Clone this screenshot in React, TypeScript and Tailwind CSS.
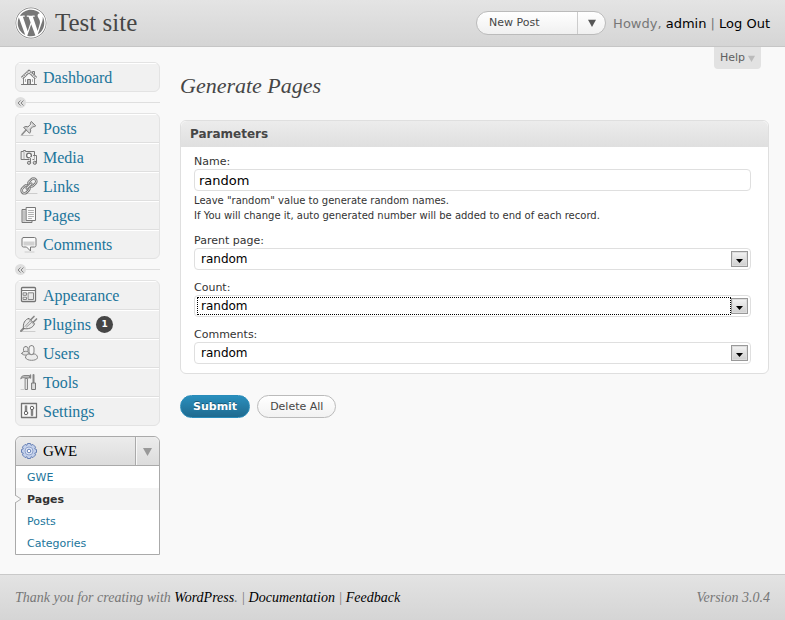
import type { ReactNode } from "react";
import { FaWordpress } from "react-icons/fa";

const sans = "font-['DejaVu_Sans','Liberation_Sans',sans-serif]";
const serif = "font-['Liberation_Serif',serif]";

function Icon({ children }: { children: ReactNode }) {
  return (
    <svg
      viewBox="0 0 18 18"
      className="h-[18px] w-[18px] shrink-0"
      fill="none"
      stroke="#858585"
      strokeWidth="1"
      strokeLinejoin="round"
      strokeLinecap="round"
      aria-hidden="true"
    >
      {children}
    </svg>
  );
}

const icons: Record<string, ReactNode> = {
  Dashboard: (
    <>
      <path d="M3.500 9v7.500h11V9L9 4z" fill="#f8f8f8" />
      <path d="M12.500 6V3.500h2V8" fill="#ddd" stroke="#777" />
      <path d="M2 10.200 9 3.300l7 6.900" strokeWidth="3.200" stroke="#7c7c7c" strokeLinecap="butt" />
      <path d="M2 10.200 9 3.300l7 6.900" strokeWidth="1.600" stroke="#ececec" strokeLinecap="butt" strokeDasharray="1.400 .6" />
      <path d="M5.500 11.500v2M12.500 11.500v2" stroke="#aaa" />
      <path d="M7.500 16.500v-5h3v5" fill="#bbb" stroke="#777" />
      <path d="M1.500 16.500h15" stroke="#777" />
    </>
  ),
  Posts: (
    <>
      <path d="M1 16.500h12" stroke="#c8c8c8" />
      <path d="M2 15.500 6.500 10.500" strokeWidth="1.600" stroke="#8c8c8c" />
      <path d="M4 8.200c1.300-.9 2.800-.8 3.900-.2l2.600-2.700c-.3-1 0-2 .8-2.800l4.400 4.300c-.8.9-1.900 1.100-2.800.8l-2.500 2.600c.5 1.300.4 2.600-.6 3.800z" fill="#d4d4d4" stroke="#747474" />
      <path d="m8.600 8.800 3-3" stroke="#fff" />
    </>
  ),
  Media: (
    <>
      <path d="M1.500 3.500h2v-1h2v1h9v8h-13z" fill="#eee" stroke="#777" />
      <path d="M4 4v7" stroke="#aaa" />
      <circle cx="9" cy="7.500" r="2.400" fill="#fff" stroke="#707070" strokeWidth="1.300" />
      <path d="M11 14.500V10.500M16 8v6.500" stroke="#f1f1f1" strokeWidth="3" />
      <path d="M10.500 14v-3.500M13.500 7.500h3V14" stroke="#777" />
      <circle cx="9" cy="14.800" r="1.600" fill="#ccc" stroke="#777" />
      <circle cx="14.800" cy="14.800" r="1.600" fill="#ccc" stroke="#777" />
    </>
  ),
  Links: (
    <>
      <path d="M5 16.500h12" stroke="#ccc" />
      <g transform="rotate(-45 9 9)">
        <rect x="-.3" y="6" width="9" height="5.800" rx="2.900" stroke="#777" strokeWidth="2.500" />
        <rect x="9.300" y="6" width="9" height="5.800" rx="2.900" stroke="#777" strokeWidth="2.500" />
        <rect x="-.3" y="6" width="9" height="5.800" rx="2.900" stroke="#ddd" strokeWidth=".9" />
        <rect x="9.300" y="6" width="9" height="5.800" rx="2.900" stroke="#ddd" strokeWidth=".9" />
        <path d="M6 9h6" stroke="#777" strokeWidth="3" />
        <path d="M6 9h6" stroke="#e8e8e8" />
      </g>
    </>
  ),
  Pages: (
    <>
      <path d="M5.500 3.500h-3.500v13h10v-2" fill="#ddd" stroke="#777" />
      <path d="M4 5v10" stroke="#aaa" />
      <path d="M6.500 1.500h9v13h-9z" fill="#fafafa" stroke="#777" />
      <path d="M8.500 4.500h5M8.500 6.500h5M8.500 8.500h5M8.500 10.500h5M8.500 12.500h3" stroke="#b0b0b0" />
    </>
  ),
  Comments: (
    <>
      <path d="M5 17h9" stroke="#ccc" />
      <path d="M3.500 2.500h11q1.500 0 1.500 1.500v6.500q0 1.500-1.500 1.500H10.500V16L6.500 12h-3q-1.500 0-1.500-1.500V4q0-1.500 1.500-1.500z" fill="#fafafa" stroke="#777" />
      <path d="M3.500 6.500h11v4h-11z" fill="#d0d0d0" stroke="none" />
    </>
  ),
  Appearance: (
    <>
      <rect x="1.500" y="1.500" width="14" height="14" rx="1" fill="#fafafa" stroke="#747474" strokeWidth="1.300" />
      <path d="M2 4.500h13" stroke="#777" />
      <path d="M3.500 6.800h3v2.500h-3zM3.500 11.200h3v2.300h-3zM8.500 6.800h5v6.700h-5z" fill="#e8e8e8" />
    </>
  ),
  Plugins: (
    <>
      <path d="M1 16.500h14" stroke="#ccc" />
      <path d="M1 16 4 13" strokeWidth="2" stroke="#888" />
      <path d="m10.500 5 3.500-3.500M13 7.500 16.500 4" strokeWidth="1.700" stroke="#888" />
      <path d="M3.500 13.500C2.500 8.500 5 4.500 9 3.300l5.500 5.500c-1.500 4-6 5.800-11 4.700z" fill="#e8e8e8" stroke="#747474" />
      <path d="m5 11.500 4.500-5M6.500 12l5-4.500M9 4.500l4.500 4.500" stroke="#999" />
    </>
  ),
  Users: (
    <>
      <rect x="3.500" y="2.500" width="4.500" height="6" rx="2.200" fill="#eee" />
      <path d="M1.800 9.500c0-3 7.200-3 7.200 0 0 2.200-7.200 2.200-7.200 0z" fill="#e4e4e4" />
      <rect x="9" y="1.500" width="5" height="9" rx="2.500" fill="#f4f4f4" />
      <path d="M5.500 13.500c0-2.300 1.800-3.600 3.500-3.600 1.500 1 3.500 1 5 0 1.700 0 3.500 1.500 3.500 3.600 0 3.800-12 3.800-12 0z" fill="#ececec" />
    </>
  ),
  Tools: (
    <>
      <path d="M1 5.500C1 3 3 2.500 5 2.500h4.500v2.500H5C3.500 4.500 2 4.500 1 5.500z" fill="#bbb" />
      <path d="M5.500 5.500h2v11h-2z" fill="#e4e4e4" />
      <path d="M13.500 10V2" strokeWidth="2" />
      <path d="M12 10h3.500v6.500H12z" fill="#ddd" stroke="#777" />
      <path d="M10.500 2v3" strokeWidth="1.400" />
      <path d="M1 16.500h3" stroke="#ccc" />
    </>
  ),
  Settings: (
    <>
      <rect x="1.500" y="1.500" width="15" height="14" fill="#fafafa" stroke="#747474" strokeWidth="1.300" />
      <path d="M4 3.500h4v10H4zM10 3.500h4v10h-4z" fill="#dedede" stroke="none" />
      <path d="M6 4v5.500M12 8v5.500" stroke="#666" strokeWidth="1.500" />
      <circle cx="6" cy="11" r="1.700" fill="#fff" stroke="#666" />
      <circle cx="12" cy="6" r="1.700" fill="#fff" stroke="#666" />
    </>
  ),
};

function GearIcon() {
  return (
    <svg viewBox="0 0 18 18" className="h-[18px] w-[18px] shrink-0" aria-hidden="true">
      <g fill="#c3d0ea" stroke="#6680b5" strokeWidth="1" strokeLinejoin="round">
        <path d="M7.500 1.500h3l.6 1.800 1.800-.9 2.700 2.700-.9 1.800 1.800.6v3l-1.800.6.9 1.800-2.700 2.700-1.800-.9-.6 1.800h-3l-.6-1.800-1.800.9-2.700-2.700.9-1.800-1.800-.6v-3l1.800-.6-.9-1.800 2.700-2.700 1.800.9z" />
        <circle cx="9" cy="9" r="4" fill="#dfe7f6" stroke="#8ea2cd" />
        <circle cx="9" cy="9" r="1.800" fill="#fff" />
      </g>
    </svg>
  );
}

function MenuBox({ items }: { items: { name: string; count?: number }[] }) {
  return (
    <ul className="divide-y divide-[#dfdfdf] overflow-hidden rounded-md border border-[#e3e3e3] bg-[#f1f1f1]">
      {items.map((item) => (
        <li key={item.name}>
          <a
            href="#"
            className={`${serif} flex h-7 items-center gap-[5px] pl-1 text-base text-[#21759b] shadow-[inset_0_1px_0_#fff]`}
          >
            <Icon>{icons[item.name]}</Icon>
            <span className="pt-px">{item.name}</span>
            {item.count && (
              <span
                className={`${sans} flex h-[17px] w-[17px] items-center justify-center rounded-full bg-[#464646] pt-px text-[9px] leading-none font-bold text-white`}
              >
                {item.count}
              </span>
            )}
          </a>
        </li>
      ))}
    </ul>
  );
}

function Separator() {
  return (
    <div className="flex h-[21px] items-center">
      <button
        type="button"
        aria-label="Collapse menu"
        className="flex h-[11px] w-[11px] items-center justify-center rounded-full bg-[#dfdfdf]"
      >
        <svg viewBox="0 0 8 8" className="h-2 w-2" fill="none" stroke="#888" aria-hidden="true">
          <path d="M3.500 1.500 1 4 3.500 6.500M6.500 1.500 4 4 6.500 6.500" />
        </svg>
      </button>
      <span className="h-px flex-1 bg-[#dfdfdf]" />
    </div>
  );
}

function Down({ className }: { className: string }) {
  return (
    <svg viewBox="0 0 10 10" className={className} fill="currentColor" aria-hidden="true">
      <path d="M0 1h10L5 10z" />
    </svg>
  );
}

function SelectField({ id, label, focused }: { id: string; label: string; focused?: boolean }) {
  return (
    <div>
      <label htmlFor={id} className="block text-[11px] leading-[15px]">
        {label}
      </label>
      <div className="relative">
        <select
          id={id}
          className="block h-[22px] w-full appearance-none rounded border border-[#dfdfdf] bg-white pl-1.5 text-xs text-black outline-none"
        >
          <option>random</option>
        </select>
        {focused && (
          <span className="pointer-events-none absolute inset-y-[2px] right-5 left-[3px] border border-dotted border-black" />
        )}
        <span className="pointer-events-none absolute top-[3px] right-[3px] flex h-4 w-[17px] items-end justify-center border border-[#999] bg-linear-to-b from-[#f4f4f4] to-[#cfcfcf] pb-[3px] shadow-[inset_0_0_0_1px_#ddd]">
          <svg viewBox="0 0 7 4" className="h-1 w-[7px]" aria-hidden="true">
            <path d="M0 0h7L3.500 4z" />
          </svg>
        </span>
      </div>
    </div>
  );
}

const submenu = ["GWE", "Pages", "Posts", "Categories"];

export default function App() {
  return (
    <div className={`${sans} flex min-h-screen flex-col bg-[#f9f9f9] text-[#333]`}>
      <header className="flex h-[47px] items-center border-b border-[#c6c6c6] bg-linear-to-b from-[#e4e4e4] to-[#d5d5d5] px-[15px]">
        <span className="rounded-full bg-white">
          <FaWordpress className="h-8 w-8 text-[#777]" aria-hidden="true" />
        </span>
        <h1 className={`${serif} ml-2 flex-1 text-[25px] text-[#464646]`}>
          <a href="#">Test site</a>
        </h1>
        <div className="mr-[7px] flex h-6 w-[130px] overflow-hidden rounded-full border border-[#bbb] bg-linear-to-b from-white to-[#f0f0f0] text-[11px] text-[#464646]">
          <button type="button" className="flex-1 pt-px pl-3 text-left">
            New Post
          </button>
          <button
            type="button"
            aria-label="More actions"
            className="flex w-7 items-center justify-center border-l border-[#ccc]"
          >
            <Down className="h-2 w-2 text-[#555]" />
          </button>
        </div>
        <p className="pt-px text-[13px] text-[#777]">
          Howdy, <a href="#" className="text-black">admin</a> |{" "}
          <a href="#" className="text-black">Log Out</a>
        </p>
      </header>

      <div className="flex flex-1 gap-5 pr-4 pl-[15px]">
        <nav className="w-[145px] shrink-0 pt-[15px] pb-4">
          <MenuBox items={[{ name: "Dashboard" }]} />
          <Separator />
          <MenuBox
            items={[{ name: "Posts" }, { name: "Media" }, { name: "Links" }, { name: "Pages" }, { name: "Comments" }]}
          />
          <Separator />
          <MenuBox
            items={[
              { name: "Appearance" },
              { name: "Plugins", count: 1 },
              { name: "Users" },
              { name: "Tools" },
              { name: "Settings" },
            ]}
          />
          <div className="mt-[10px] rounded-t-md border border-[#aaa] bg-white">
            <div className="flex h-[29px] rounded-t-md border-b border-[#aaa] bg-linear-to-b from-[#ececec] to-[#dcdcdc]">
              <a href="#" className={`${serif} flex flex-1 items-center gap-[5px] pl-1 text-[15px] text-black`}>
                <GearIcon />
                GWE
              </a>
              <button
                type="button"
                aria-label="Toggle GWE menu"
                className="flex w-6 items-center justify-center border-l border-[#aaa] pr-px shadow-[inset_1px_0_0_#f8f8f8]"
              >
                <Down className="h-[9px] w-[9px] text-[#999]" />
              </button>
            </div>
            <ul className="text-[11px] leading-[21px]">
              {submenu.map((name) => (
                <li key={name} className={name === "Pages" ? "relative bg-[#f5f5f5]" : ""}>
                  {name === "Pages" && (
                    <svg viewBox="0 0 7 8" className="absolute top-[7px] -left-px h-2 w-[7px]" aria-hidden="true">
                      <path d="M0 0 6 4 0 8" fill="#f9f9f9" stroke="#aaa" />
                    </svg>
                  )}
                  <a
                    href="#"
                    className={`block pt-px pl-[11px] ${name === "Pages" ? "font-bold text-[#333]" : "text-[#21759b]"}`}
                  >
                    {name}
                  </a>
                </li>
              ))}
            </ul>
          </div>
        </nav>

        <main className="flex min-w-0 flex-1 flex-col">
          <button
            type="button"
            className="mr-2 flex h-[22px] items-center gap-[3px] self-end rounded-b-[4px] bg-[#e2e2e2] px-1.5 pt-px text-[11px] text-[#606060]"
          >
            Help
            <Down className="h-[7px] w-[7px] text-[#bbb]" />
          </button>
          <h2 className={`${serif} mt-1 text-[22px] leading-[26px] text-[#464646] italic`}>Generate Pages</h2>

          <form>
            <section className="mt-[21px] rounded-md border border-[#dfdfdf] bg-white">
              <h3 className="h-[26px] rounded-t-md bg-linear-to-b from-[#ececec] to-[#dfdfdf] pl-[9px] text-xs leading-[26px] font-bold text-[#464646]">
                Parameters
              </h3>
              <div className="flex flex-col gap-[10px] pt-[7px] pr-[17px] pb-[9px] pl-[13px]">
                <div>
                  <label htmlFor="name" className="block text-[11px] leading-[15px]">
                    Name:
                  </label>
                  <input
                    id="name"
                    type="text"
                    defaultValue="random"
                    className="block h-[22px] w-full rounded border border-[#dfdfdf] bg-white px-1 text-[13px] text-black"
                  />
                  <p className="mt-[2px] text-[10px] leading-[15px]">
                    Leave "random" value to generate random names.
                    <br />
                    If You will change it, auto generated number will be added to end of each record.
                  </p>
                </div>
                <SelectField id="parent" label="Parent page:" />
                <SelectField id="count" label="Count:" focused />
                <SelectField id="comments" label="Comments:" />
              </div>
            </section>
            <div className="mt-[21px] flex gap-[7px] text-[11px]">
              <button
                type="submit"
                className="h-[23px] rounded-full border border-[#298cba] bg-linear-to-b from-[#2a8fbd] to-[#1f6a8f] px-3 pt-px font-bold text-white [text-shadow:0_-1px_0_#00000055]"
              >
                Submit
              </button>
              <button
                type="button"
                className="h-[23px] rounded-full border border-[#bbb] bg-linear-to-b from-white to-[#f2f2f2] px-3 pt-px text-[#464646]"
              >
                Delete All
              </button>
            </div>
          </form>
        </main>
      </div>

      <footer
        className={`${serif} flex h-[46px] items-center justify-between border-t border-[#c9c9c9] bg-linear-to-b from-[#e3e3e3] to-[#d5d5d5] px-[15px] text-sm text-[#777] italic`}
      >
        <p>
          Thank you for creating with <a href="#" className="text-black">WordPress</a>. |{" "}
          <a href="#" className="text-black">Documentation</a> | <a href="#" className="text-black">Feedback</a>
        </p>
        <p>Version 3.0.4</p>
      </footer>
    </div>
  );
}
